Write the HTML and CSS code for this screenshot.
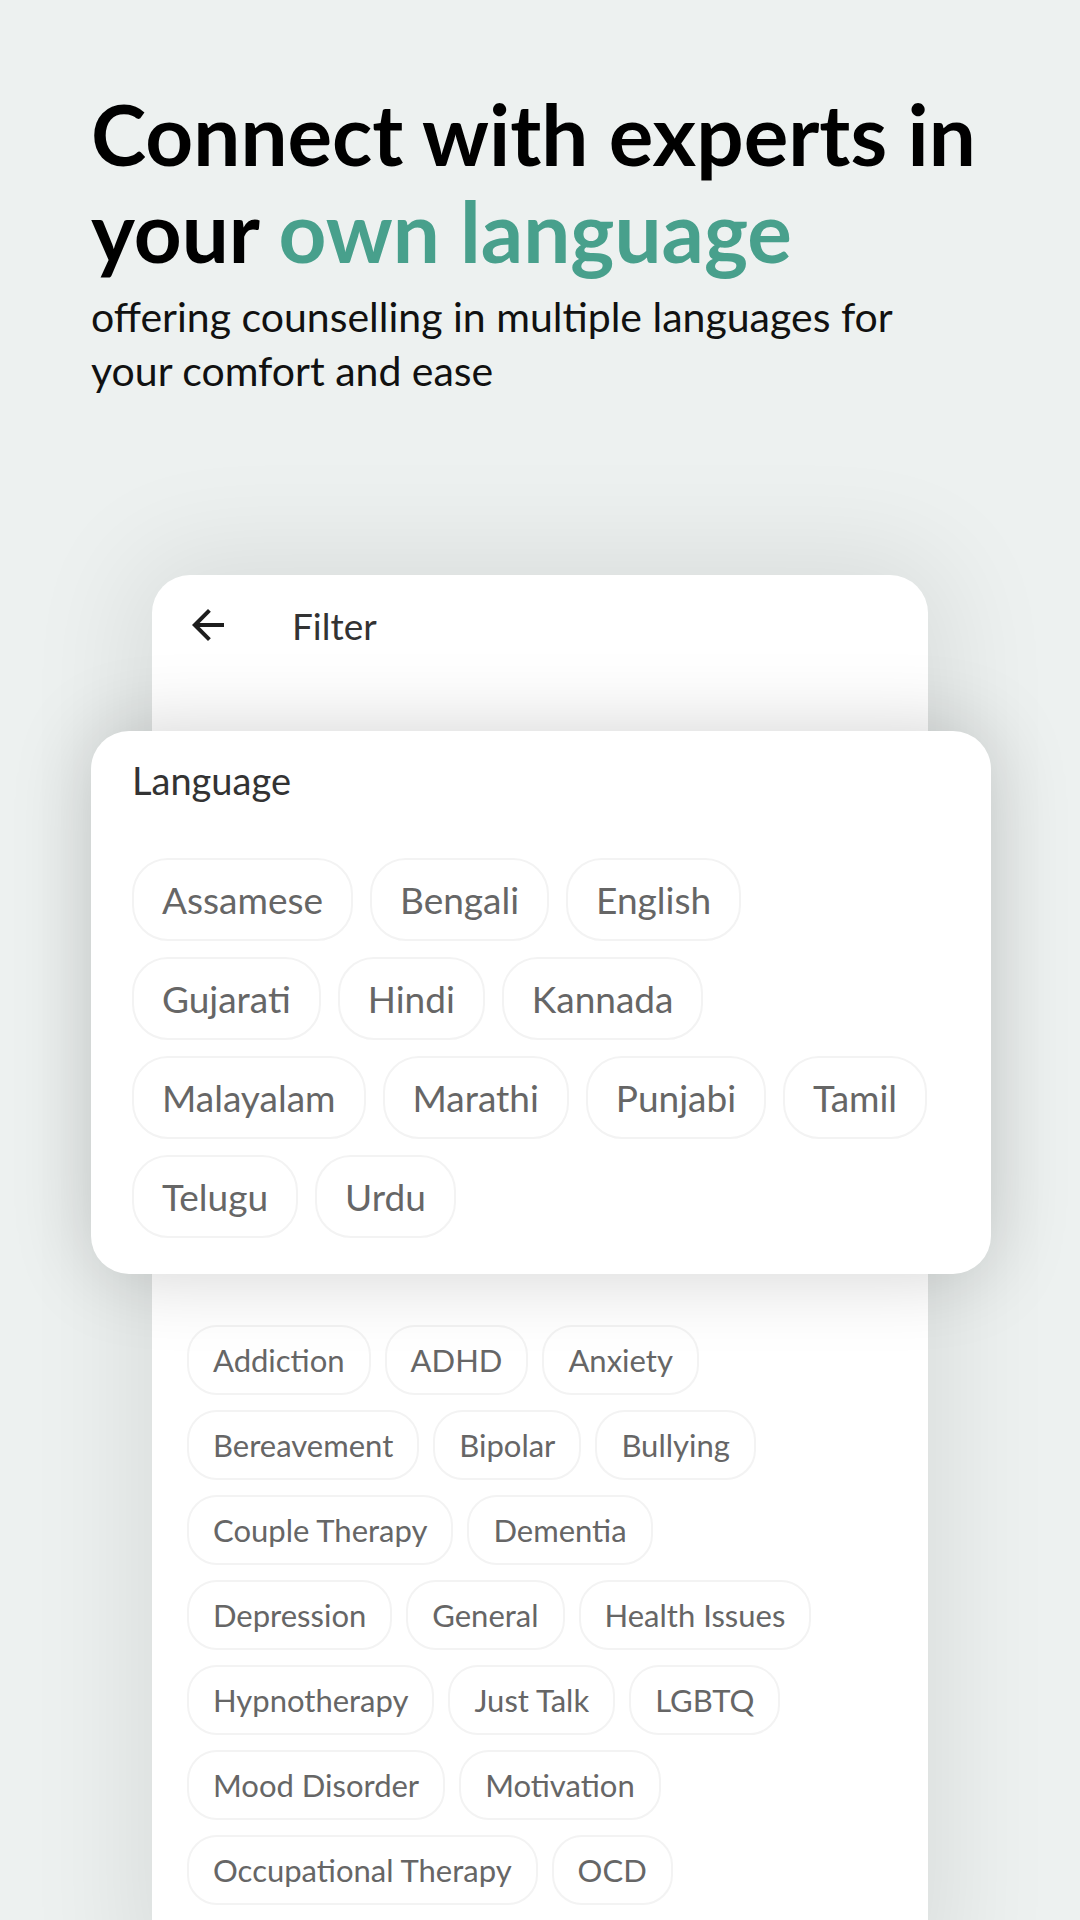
FILE: index.html
```html
<!DOCTYPE html>
<html lang="en">
<head>
<meta charset="utf-8">
<title>Connect with experts in your own language</title>
<link rel="stylesheet" href="styles.css">
</head>
<body>
<main class="screen">
  <section class="hero">
    <h1 class="title">Connect with experts in your <span class="accent">own language</span></h1>
    <p class="subtitle">offering counselling in multiple languages for your comfort and ease</p>
  </section>

  <section class="stage">
    <div class="phone">
      <header class="phone-header">
        <svg class="back" viewBox="0 0 24 24" aria-hidden="true"><path d="M20 11H7.83l5.59-5.59L12 4l-8 8 8 8 1.41-1.41L7.83 13H20v-2z"/></svg>
        <span class="phone-title">Filter</span>
      </header>
      <div class="phone-hidden"></div>
      <div class="chips chips-small">
        <span class="chip">Addiction</span>
        <span class="chip">ADHD</span>
        <span class="chip">Anxiety</span>
        <span class="chip">Bereavement</span>
        <span class="chip">Bipolar</span>
        <span class="chip">Bullying</span>
        <span class="chip">Couple Therapy</span>
        <span class="chip">Dementia</span>
        <span class="chip">Depression</span>
        <span class="chip">General</span>
        <span class="chip">Health Issues</span>
        <span class="chip">Hypnotherapy</span>
        <span class="chip">Just Talk</span>
        <span class="chip">LGBTQ</span>
        <span class="chip">Mood Disorder</span>
        <span class="chip">Motivation</span>
        <span class="chip">Occupational Therapy</span>
        <span class="chip">OCD</span>
      </div>
    </div>

    <div class="lang-card">
      <h2 class="lang-title">Language</h2>
      <div class="chips chips-large">
        <span class="chip">Assamese</span>
        <span class="chip">Bengali</span>
        <span class="chip">English</span>
        <span class="chip">Gujarati</span>
        <span class="chip">Hindi</span>
        <span class="chip">Kannada</span>
        <span class="chip">Malayalam</span>
        <span class="chip">Marathi</span>
        <span class="chip">Punjabi</span>
        <span class="chip">Tamil</span>
        <span class="chip">Telugu</span>
        <span class="chip">Urdu</span>
      </div>
    </div>
  </section>
</main>
</body>
</html>
```

FILE: styles.css
```css
* { box-sizing: border-box; }

html, body {
  margin: 0;
  padding: 0;
}

body {
  background: #edf1f0;
  font-family: "Lato", "Noto Sans", "Liberation Sans", sans-serif;
  color: #111;
}

.screen {
  width: 1080px;
  height: 1920px;
  overflow: hidden;
  position: relative;
}

.hero {
  padding: 86px 0 0 91px;
}

.title {
  margin: 0;
  font-size: 83.5px;
  line-height: 97px;
  font-weight: 700;
  color: #000;
  letter-spacing: 0;
  width: 940px;
}

.accent {
  color: #48a08c;
}

.subtitle {
  margin: 10px 0 0;
  font-size: 41px;
  line-height: 54px;
  font-weight: 400;
  color: #111;
  width: 840px;
}

.stage {
  position: relative;
  margin-top: 177px;
}

.phone {
  margin-left: 152px;
  width: 776px;
  height: 1400px;
  background: #fff;
  border-radius: 38px 38px 0 0;
  box-shadow: 0 0 110px 20px rgba(0, 0, 0, 0.085);
}

.phone-header {
  height: 100px;
  display: flex;
  align-items: center;
  gap: 60px;
  padding-left: 32px;
}

.back {
  width: 48px;
  height: 48px;
  fill: #1d1d1d;
}

.phone-title {
  font-size: 37px;
  color: #333;
}

.phone-hidden {
  height: 650px;
}

.chips {
  display: flex;
  flex-wrap: wrap;
}

.chip {
  display: inline-flex;
  align-items: center;
  border: 2px solid #f3f3f3;
  background: #fff;
  color: #666;
  white-space: nowrap;
}

.chips-small {
  margin-left: 35px;
  width: 665px;
  gap: 15px 14px;
}

.chips-small .chip {
  height: 70px;
  padding: 0 24px;
  border-radius: 30px;
  font-size: 31px;
}

.lang-card {
  position: absolute;
  top: 156px;
  left: 91px;
  width: 900px;
  height: 543px;
  background: #fff;
  border-radius: 38px;
  padding: 0 41px;
  box-shadow: 0 0 80px rgba(0, 0, 0, 0.18);
}

.lang-title {
  margin: 0;
  padding-top: 26px;
  font-size: 38px;
  line-height: 46px;
  font-weight: 400;
  color: #333;
}

.chips-large {
  margin-top: 55px;
  width: 802px;
  gap: 16px 17px;
}

.chips-large .chip {
  height: 83px;
  padding: 0 28px;
  border-radius: 36px;
  font-size: 37px;
}
```
